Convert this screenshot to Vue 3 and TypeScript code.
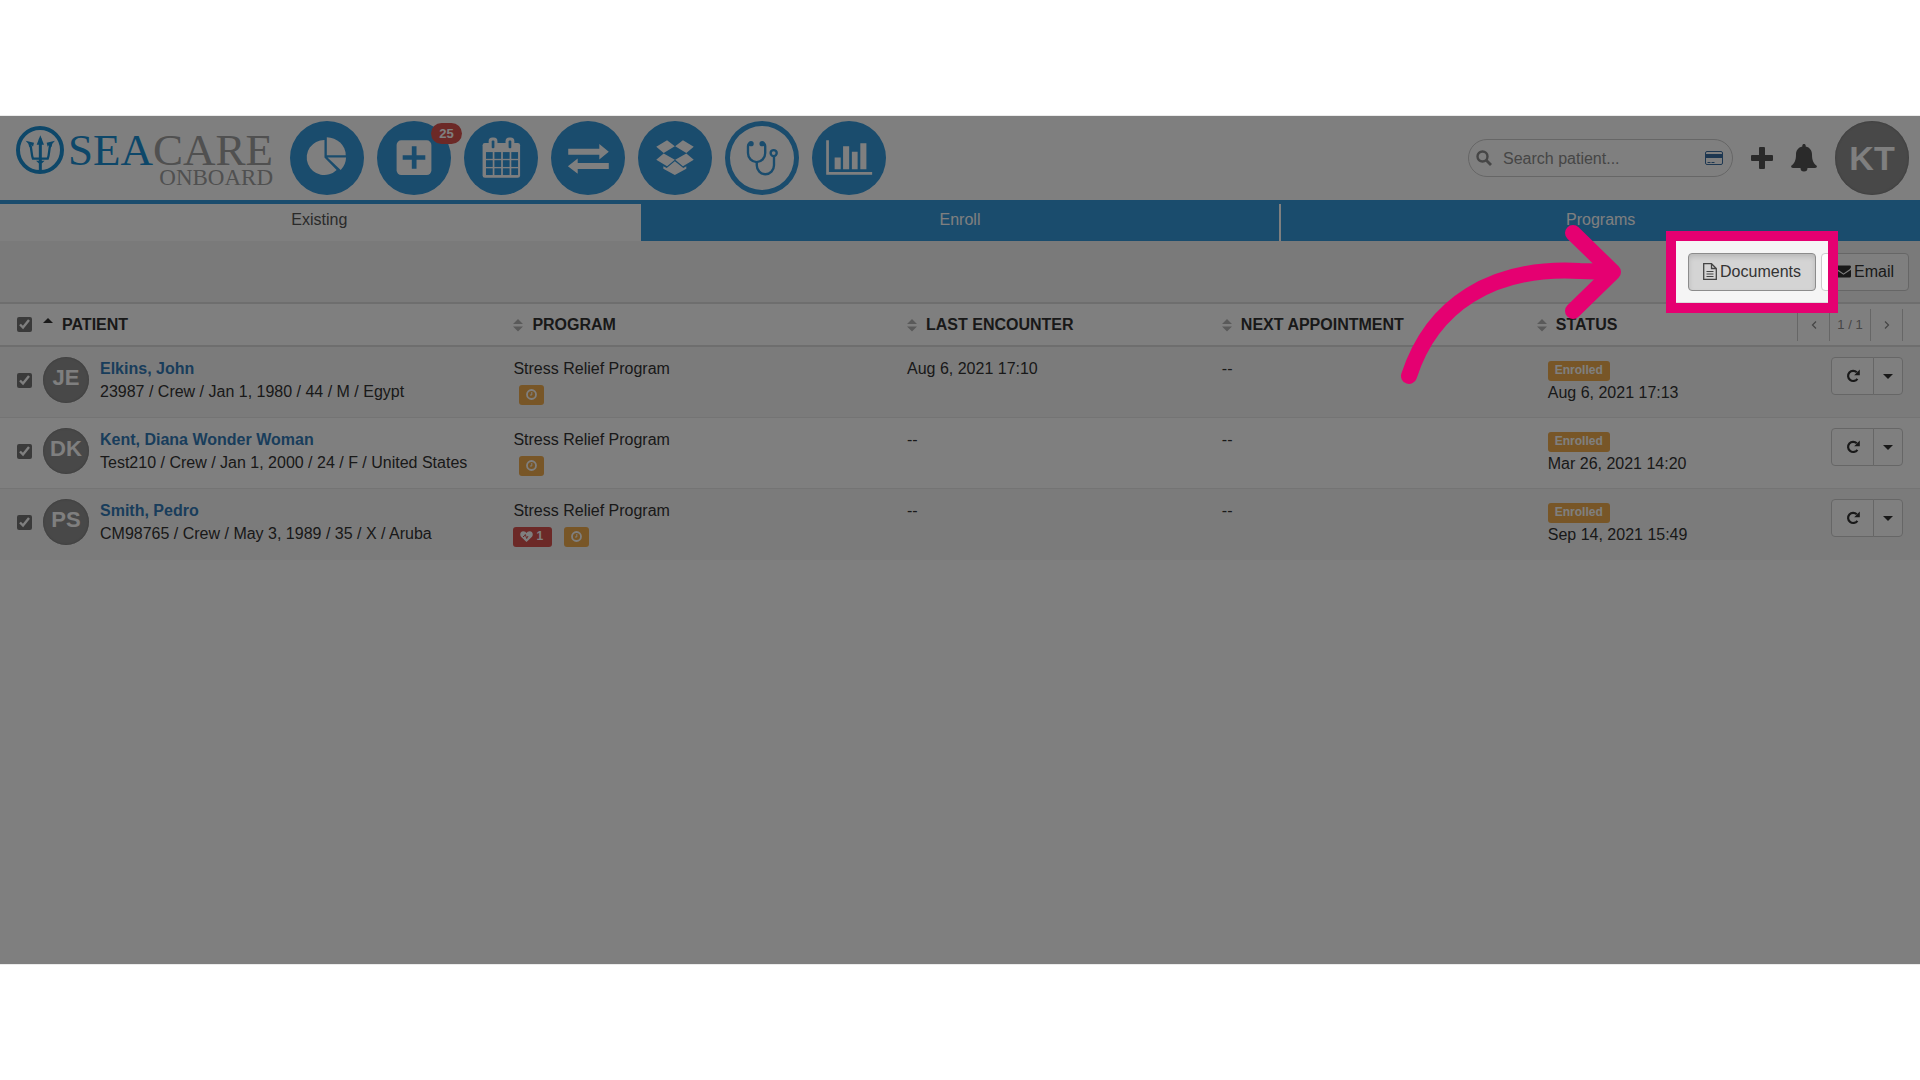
<script setup lang="ts">
import { ref } from 'vue'

interface Patient {
  initials: string
  name: string
  details: string
  alerts: number
  lastEncounter: string
  nextAppointment: string
  statusDate: string
}

const patients: Patient[] = [
  {
    initials: 'JE',
    name: 'Elkins, John',
    details: '23987 / Crew / Jan 1, 1980 / 44 / M / Egypt',
    alerts: 0,
    lastEncounter: 'Aug 6, 2021 17:10',
    nextAppointment: '--',
    statusDate: 'Aug 6, 2021 17:13',
  },
  {
    initials: 'DK',
    name: 'Kent, Diana Wonder Woman',
    details: 'Test210 / Crew / Jan 1, 2000 / 24 / F / United States',
    alerts: 0,
    lastEncounter: '--',
    nextAppointment: '--',
    statusDate: 'Mar 26, 2021 14:20',
  },
  {
    initials: 'PS',
    name: 'Smith, Pedro',
    details: 'CM98765 / Crew / May 3, 1989 / 35 / X / Aruba',
    alerts: 1,
    lastEncounter: '--',
    nextAppointment: '--',
    statusDate: 'Sep 14, 2021 15:49',
  },
]

const columns = ['PROGRAM', 'LAST ENCOUNTER', 'NEXT APPOINTMENT', 'STATUS']
const allSelected = ref(true)
const selected = ref<string[]>(patients.map((p) => p.initials))
const search = ref('')

const calendarCells = Array.from({ length: 12 }, (_, i) => ({
  x: 65 + (i % 4) * 25,
  y: 92 + Math.floor(i / 4) * 24,
}))
</script>

<template>
  <div class="stage">
    <header class="topbar">
      <a class="logo" href="#" aria-label="Seacare Onboard">
        <svg class="logo-mark" viewBox="0 0 144 144" aria-hidden="true">
          <g fill="none" stroke="#1a8fd3">
            <circle cx="72" cy="72" r="66" stroke-width="12" />
            <path d="M73 38V138" stroke-width="9" />
            <path d="M42 54C48 70 45 84 51 98H95C101 84 98 70 104 54" stroke-width="7" />
          </g>
          <path
            d="M73 28L84 56H62ZM29 44L54 50L51 62L46 56L40 64L37 53ZM117 44L92 50L95 62L100 56L106 64L109 53ZM60 104H86L78 112H68Z"
            fill="#1a8fd3"
          />
        </svg>
        <span class="logo-text">
          <span class="logo-name"><span class="logo-sea">SEA</span>CARE</span>
          <span class="logo-sub">ONBOARD</span>
        </span>
      </a>

      <nav class="modules" aria-label="Modules">
        <a class="module" href="#" aria-label="Dashboard">
          <svg viewBox="0 0 219 219">
            <path d="M102 56A52 52 0 1 0 138 145L102 108Z" />
            <path d="M109 48A57 54 0 0 1 165 101H109Z" />
            <path d="M111 108H166A56 56 0 0 1 150 145Z" />
          </svg>
        </a>
        <a class="module" href="#" aria-label="Medical">
          <svg viewBox="0 0 219 219">
            <rect x="58" y="57" width="103" height="103" rx="14" />
            <path class="cut" d="M103 75h14v26h26v14h-26v26h-14v-26h-27v-14h27z" />
          </svg>
          <span class="count">25</span>
        </a>
        <a class="module" href="#" aria-label="Calendar">
          <svg viewBox="0 0 219 219">
            <rect x="55" y="65" width="111" height="103" rx="7" />
            <rect x="73" y="49" width="26" height="36" rx="11" />
            <rect x="123" y="49" width="26" height="36" rx="11" />
            <rect class="cut" x="82" y="58" width="8" height="23" rx="3" />
            <rect class="cut" x="132" y="58" width="8" height="23" rx="3" />
            <rect
              v-for="(c, i) in calendarCells"
              :key="i"
              class="cut"
              :x="c.x"
              :y="c.y"
              width="20"
              height="20"
            />
          </svg>
        </a>
        <a class="module" href="#" aria-label="Transfers">
          <svg viewBox="0 0 219 219">
            <path d="M51 82H143V68L171 91L143 114V100H51Z" />
            <path d="M171 124H79V111L50 134L79 156V142H171Z" />
          </svg>
        </a>
        <a class="module" href="#" aria-label="Inventory">
          <svg viewBox="0 0 219 219">
            <path d="M86 57L109 75L76 95L54 76Z" />
            <path d="M133 57L110 75L143 95L165 76Z" />
            <path d="M76 96L109 115L86 134L54 115Z" />
            <path d="M143 96L110 115L133 134L165 115Z" />
            <path d="M109 119L134 139L143 134V141L109 160L75 141V134L85 139Z" />
          </svg>
        </a>
        <a class="module module-open" href="#" aria-label="Programs" aria-current="page">
          <svg viewBox="0 0 219 219">
            <g class="line">
              <path d="M78 66C70 66 68 68 68 75V95A25 26 0 0 0 119 95V75C119 68 117 66 109 66" />
              <path d="M94 121V131A25 26 0 0 0 145 131V106" />
              <circle cx="144" cy="95" r="9" />
            </g>
            <circle class="dot" cx="77" cy="67" r="8" />
            <circle class="dot" cx="110" cy="67" r="8" />
          </svg>
        </a>
        <a class="module" href="#" aria-label="Reports">
          <svg viewBox="0 0 219 219">
            <path d="M42 57h8v94h128v8H42z" />
            <path d="M67 108h18v35H67zM92 75h18v68H92zM118 91h17v52h-17zM143 66h18v77h-18z" />
          </svg>
        </a>
      </nav>

      <div class="tools">
        <label class="search">
          <svg class="search-icon" viewBox="0 0 16 16" aria-hidden="true">
            <circle cx="6.5" cy="6.5" r="5" fill="none" stroke="#8c8c8c" stroke-width="2.4" />
            <path d="M10 10L15 15" stroke="#8c8c8c" stroke-width="2.8" />
          </svg>
          <input v-model="search" type="text" placeholder="Search patient..." aria-label="Search patient" />
          <svg class="card-icon" viewBox="0 0 18 14" aria-hidden="true">
            <rect x="0.5" y="0.5" width="17" height="13" rx="1.5" fill="none" stroke="#3b6fa3" />
            <path d="M0 3h18v4H0z" fill="#3b6fa3" />
            <path d="M2.500 11.500h3M6.500 11.500h3" stroke="#3b6fa3" />
          </svg>
        </label>
        <button class="icon-button" type="button" aria-label="Add">
          <svg width="22" height="22" viewBox="0 0 22 22">
            <path
              d="M9 0h4q1 0 1 1v7h7q1 0 1 1v4q0 1-1 1h-7v7q0 1-1 1H9q-1 0-1-1v-7H1q-1 0-1-1V9q0-1 1-1h7V1q0-1 1-1z"
            />
          </svg>
        </button>
        <button class="icon-button" type="button" aria-label="Notifications">
          <svg width="26" height="28" viewBox="0 0 26 28">
            <path
              d="M13 0c1 0 1.700.7 1.700 1.700v.8C19 3.500 21 6.500 21 10.500c0 6 1.500 9 5 11.500q0 2-2 2h-7.500a3.500 3.500 0 0 1-7 0H2q-2 0-2-2c3.500-2.500 5-5.500 5-11.500 0-4 2-7 6.300-8v-.8C11.300.7 12 0 13 0z"
            />
          </svg>
        </button>
        <button class="avatar avatar-large" type="button">KT</button>
      </div>
    </header>

    <nav class="tabs" aria-label="Program views">
      <a class="tab tab-active" href="#">Existing</a>
      <a class="tab" href="#">Enroll</a>
      <a class="tab" href="#">Programs</a>
    </nav>

    <div class="toolbar">
      <div class="guide">
        <button class="btn btn-pressed" type="button">
          <svg width="14" height="17" viewBox="0 0 14 17" fill="none" stroke="#444" aria-hidden="true">
            <path d="M.7.700H8.500L13.300 5.500V16.300H.7ZM8.500.700V5.500H13.300" stroke-width="1.300" />
            <path d="M3.500 8.500h7M3.500 11h7M3.500 13.500h7" />
          </svg>
          Documents
        </button>
        <div class="spotlight"></div>
        <svg class="pointer" viewBox="0 0 224 162" aria-hidden="true">
          <path d="M9 152C32 81 92 42 180 47L213 48M173 9L213 48L173 87" />
        </svg>
      </div>
      <button class="btn" type="button">
        <svg width="15" height="13" viewBox="0 0 16 13" fill="#333" aria-hidden="true">
          <path d="M1.500 0h13Q16 0 16 1.500 16 3 14.500 4L8 8.500 1.500 4Q0 3 0 1.500 0 0 1.500 0z" />
          <path d="M0 4.500L8 10l8-5.500V11.500Q16 13 14.500 13h-13Q0 13 0 11.500z" />
        </svg>
        Email
      </button>
    </div>

    <table class="patients">
      <colgroup>
        <col class="col-check" />
        <col class="col-patient" />
        <col class="col-program" />
        <col class="col-date" />
        <col class="col-date" />
        <col />
        <col class="col-actions" />
      </colgroup>
      <thead>
        <tr>
          <th class="check"><input v-model="allSelected" type="checkbox" aria-label="Select all" /></th>
          <th>
            <span class="heading">
              <svg class="sort" viewBox="0 0 10 14" aria-hidden="true"><path d="M0 5l5-5 5 5z" fill="#333" /></svg>
              PATIENT
            </span>
          </th>
          <th v-for="column in columns" :key="column">
            <span class="heading">
              <svg class="sort" viewBox="0 0 10 14" aria-hidden="true">
                <path d="M0 6l5-5 5 5zM0 8.500h10l-5 5z" fill="#b4b4b4" />
              </svg>
              {{ column }}
            </span>
          </th>
          <th>
            <div class="pager">
              <button type="button" aria-label="Previous page">
                <svg width="6" height="8" viewBox="0 0 6 8"><path d="M5 .5L1.500 4L5 7.500" /></svg>
              </button>
              <span>1 / 1</span>
              <button type="button" aria-label="Next page">
                <svg width="6" height="8" viewBox="0 0 6 8"><path d="M1 .5L4.500 4L1 7.500" /></svg>
              </button>
            </div>
          </th>
        </tr>
      </thead>
      <tbody>
        <tr v-for="patient in patients" :key="patient.initials">
          <td class="check">
            <input v-model="selected" type="checkbox" :value="patient.initials" :aria-label="patient.name" />
          </td>
          <td>
            <div class="person">
              <span class="avatar">{{ patient.initials }}</span>
              <div>
                <a class="name" href="#">{{ patient.name }}</a>
                <div>{{ patient.details }}</div>
              </div>
            </div>
          </td>
          <td>
            <div>Stress Relief Program</div>
            <div class="labels">
              <span v-if="patient.alerts" class="label label-danger">
                <svg width="13" height="11" viewBox="0 0 13 11" aria-hidden="true">
                  <path
                    d="M6.500 11L1 5.700C-.5 4 .2.300 3.300.300 5 .300 6 1.300 6.500 2 7 1.300 8 .300 9.700.300 12.800.300 13.500 4 12 5.700z"
                    fill="#fff"
                  />
                  <path d="M3 5.500h1L5.300 3.500l1.400 4L8 5" fill="none" stroke="#d9534f" />
                </svg>
                {{ patient.alerts }}
              </span>
              <span class="label label-clock" :class="{ 'label-first': !patient.alerts }">
                <svg width="11" height="11" viewBox="0 0 11 11" fill="none" stroke="#fff" aria-hidden="true">
                  <circle cx="5.500" cy="5.500" r="4.500" stroke-width="1.800" />
                  <path d="M5.800 3v3H4" />
                </svg>
              </span>
            </div>
          </td>
          <td>{{ patient.lastEncounter }}</td>
          <td>{{ patient.nextAppointment }}</td>
          <td class="status">
            <span class="label">Enrolled</span>
            <div>{{ patient.statusDate }}</div>
          </td>
          <td>
            <div class="actions">
              <button class="refresh" type="button" aria-label="Refresh">
                <svg width="14" height="14" viewBox="0 0 14 14">
                  <path d="M10.800 3.300A5.100 5.100 0 1 0 11.400 9.800" fill="none" stroke="#333" stroke-width="2.200" />
                  <path d="M13.800.600V6.200H8.200z" fill="#333" />
                </svg>
              </button>
              <button class="more" type="button" aria-label="More actions">
                <svg width="10" height="5" viewBox="0 0 10 5"><path d="M0 0h10L5 5z" fill="#333" /></svg>
              </button>
            </div>
          </td>
        </tr>
      </tbody>
    </table>
  </div>
</template>

<style>
body {
  margin: 0;
  background: #fff;
}
</style>

<style scoped>
.stage {
  --blue: #3498db;
  box-sizing: border-box;
  margin: 115px 0;
  min-height: calc(100vh - 230px);
  overflow: hidden;
  border: solid #ebebeb;
  border-width: 1px 0;
  background: #fff;
  color: #333;
  font-family: 'Liberation Sans', Arial, sans-serif;
  font-size: 16px;
  line-height: 23px;
}

a {
  color: inherit;
  text-decoration: none;
}

button,
input {
  font: inherit;
  color: inherit;
}

button {
  padding: 0;
  border: 0;
  background: none;
}

.topbar {
  display: flex;
  align-items: center;
  height: 84px;
  padding: 0 11px 0 16px;
  border-bottom: 4px solid var(--blue);
}

.logo {
  display: flex;
  align-items: flex-start;
  gap: 4px;
  width: 274px;
  padding-bottom: 2px;
}

.logo-mark {
  width: 48px;
  height: 48px;
}

.logo-text {
  display: flex;
  flex-direction: column;
  align-items: flex-end;
  padding-top: 6px;
  font-family: 'Liberation Serif', 'Times New Roman', serif;
  color: #a0a0a0;
}

.logo-name {
  font-size: 45px;
  line-height: 36px;
}

.logo-sea {
  color: #1a8fd3;
}

.logo-sub {
  font-size: 23px;
  line-height: 20px;
}

.modules {
  display: flex;
  gap: 13px;
}

.module {
  position: relative;
  box-sizing: border-box;
  width: 74px;
  height: 74px;
  border-radius: 50%;
  background: var(--blue);
}

.module svg {
  display: block;
  width: 74px;
  height: 74px;
  fill: #fff;
}

.module .cut,
.module .dot {
  fill: var(--blue);
}

.module .line {
  fill: none;
  stroke: var(--blue);
  stroke-width: 7;
}

.module-open {
  background: #fff;
  box-shadow: inset 0 0 0 5px var(--blue);
}

.count {
  position: absolute;
  top: 2px;
  right: -11px;
  width: 31px;
  border-radius: 11px;
  background: #d9534f;
  color: #fff;
  font-size: 13px;
  font-weight: bold;
  line-height: 21px;
  text-align: center;
}

.tools {
  display: flex;
  align-items: center;
  gap: 18px;
  margin-left: auto;
}

.search {
  display: flex;
  align-items: center;
  box-sizing: border-box;
  width: 265px;
  height: 38px;
  padding: 0 9px 0 7px;
  border: 1px solid #ccc;
  border-radius: 19px;
}

.search-icon {
  width: 16px;
  height: 16px;
}

.search input {
  flex: 1;
  min-width: 0;
  padding: 0 0 0 11px;
  border: 0;
  outline: 0;
  background: none;
}

.search input::placeholder {
  color: #8c8c8c;
}

.card-icon {
  width: 18px;
  height: 14px;
}

.icon-button svg {
  display: block;
  fill: #555;
}

.avatar {
  flex: none;
  box-sizing: border-box;
  width: 46px;
  height: 46px;
  border-radius: 50%;
  background: #909090;
  box-shadow: inset 0 0 2px #666;
  color: #fff;
  font-size: 22px;
  font-weight: bold;
  line-height: 41px;
  text-align: center;
}

.avatar-large {
  width: 74px;
  height: 74px;
  font-size: 34px;
  line-height: 72px;
}

.tabs {
  display: flex;
  background: var(--blue);
}

.tab {
  flex: 1;
  height: 30px;
  padding-top: 4px;
  padding-bottom: 3px;
  border-right: 2px solid #fff;
  color: #fff;
  text-align: center;
}

.tab:last-child {
  border-right: 0;
}

.tab-active {
  background: #fff;
  color: #555;
}

.toolbar {
  display: flex;
  justify-content: flex-end;
  gap: 5px;
  padding: 12px 11px 11px;
  border-bottom: 2px solid #ddd;
  background: #f5f5f5;
}

.btn {
  display: flex;
  align-items: center;
  gap: 3px;
  box-sizing: border-box;
  height: 38px;
  padding: 0 14px 2px;
  border: 1px solid #ccc;
  border-radius: 4px;
  background: #fff;
}

.btn-pressed {
  border-color: #8c8c8c;
  background: #d4d4d4;
  box-shadow: inset 0 3px 5px rgba(0, 0, 0, 0.125);
}

.guide {
  position: relative;
}

/* Dims everything in the stage outside the frame */
.spotlight {
  position: absolute;
  inset: -22px;
  border: 10px solid #e50071;
  box-shadow: 0 0 0 3000px rgba(0, 0, 0, 0.5);
  pointer-events: none;
}

.pointer {
  position: absolute;
  top: -29px;
  left: -288px;
  width: 224px;
  height: 162px;
  fill: none;
  stroke: #e50071;
  stroke-width: 16;
  stroke-linecap: round;
  stroke-linejoin: round;
  pointer-events: none;
}

.patients {
  width: 100%;
  table-layout: fixed;
  border-collapse: separate;
  border-spacing: 0;
}

.col-check {
  width: 43px;
}

.col-patient {
  width: 24.5%;
}

.col-program {
  width: 20.5%;
}

.col-date {
  width: 16.4%;
}

.col-actions {
  width: 140px;
}

th {
  height: 41px;
  padding: 0;
  border-bottom: 2px solid #ddd;
  text-align: left;
}

td {
  box-sizing: border-box;
  height: 71px;
  padding: 10px 0 0;
  border-bottom: 1px solid #e8e8e8;
  vertical-align: top;
}

tbody tr:nth-child(odd) td {
  background: #f7f7f7;
}

tbody tr:last-child td {
  border-bottom: 0;
}

.check {
  padding: 0 0 0 17px;
  vertical-align: middle;
}

td.check {
  padding-bottom: 4px;
}

.check input {
  display: block;
  width: 15px;
  height: 15px;
  margin: 0;
  accent-color: #757575;
}

.heading {
  display: flex;
  align-items: center;
  gap: 9px;
}

.sort {
  width: 10px;
  height: 14px;
}

.pager {
  display: flex;
  justify-content: flex-end;
  margin-right: 17px;
  color: #8c8c8c;
  font-size: 13px;
  font-weight: normal;
  line-height: 32px;
  text-align: center;
}

.pager button {
  width: 33px;
  border: solid #ccc;
  border-width: 0 1px;
}

.pager span {
  width: 40px;
}

.pager path {
  fill: none;
  stroke: #8c8c8c;
  stroke-width: 1.3;
}

.person {
  display: flex;
  gap: 11px;
}

.name {
  color: #337ab7;
  font-weight: bold;
}

.labels {
  display: flex;
  gap: 12px;
  padding-top: 5px;
}

.label {
  display: inline-flex;
  align-items: center;
  gap: 3px;
  box-sizing: border-box;
  height: 20px;
  padding: 0 7px 2px;
  border-radius: 3px;
  background: #f0ad4e;
  color: #fff;
  font-size: 12px;
  font-weight: bold;
  line-height: 18px;
}

.label-danger {
  padding-right: 9px;
  background: #d9534f;
}

.label-first {
  margin-left: 6px;
}

.status {
  padding-top: 14px;
  padding-left: 11px;
}

.status .label {
  display: flex;
  width: max-content;
}

.actions {
  display: flex;
  justify-content: flex-end;
  margin-right: 17px;
}

.actions button {
  box-sizing: border-box;
  height: 38px;
  border: 1px solid #ccc;
  background: #fff;
}

.actions svg {
  display: block;
  margin: 0 auto;
}

.actions .refresh {
  width: 43px;
  border-radius: 4px 0 0 4px;
}

.actions .more {
  width: 30px;
  margin-left: -1px;
  border-radius: 0 4px 4px 0;
}
</style>
